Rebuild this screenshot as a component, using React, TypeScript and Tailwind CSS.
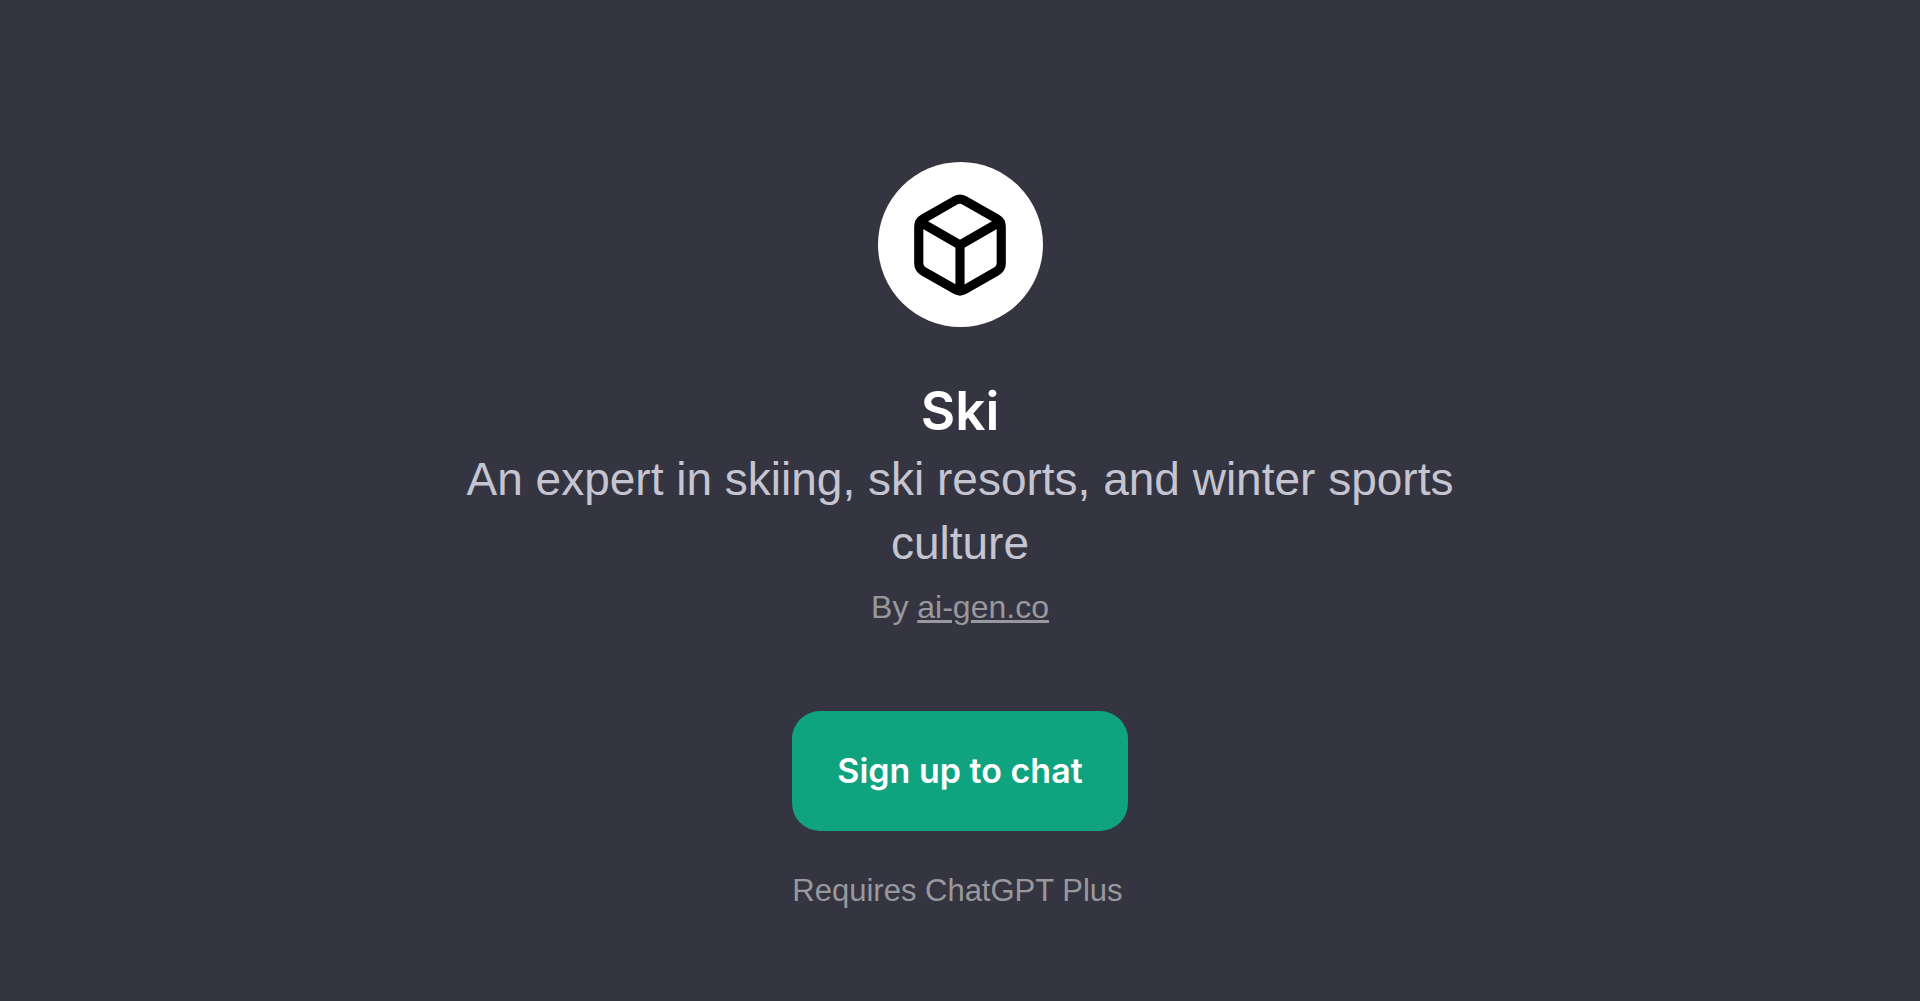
import { Box } from 'lucide-react';

const gpt = {
  name: 'Ski',
  description: 'An expert in skiing, ski resorts, and winter sports culture',
  author: 'ai-gen.co',
};

export default function App() {
  return (
    <main className="flex min-h-screen flex-col items-center bg-[#353541] px-8 pt-[162px] font-['Liberation_Sans',Arial,sans-serif]">
      <div className="flex size-[165px] items-center justify-center rounded-full bg-white">
        <Box className="size-[110px] text-black" aria-hidden="true" />
      </div>
      <h1 className="mt-12 font-['Inter',sans-serif] text-[53px] leading-[72px] font-semibold text-white">
        {gpt.name}
      </h1>
      <p className="max-w-5xl text-center text-[46px] leading-[64px] text-[#c5c5d2]">
        {gpt.description}
      </p>
      <p className="mt-2 text-[32px] leading-[48px] text-[#98989d]">
        By{' '}
        <a href="#" className="underline">
          {gpt.author}
        </a>
      </p>
      <div className="mt-20">
        <button
          type="button"
          className="block rounded-[28px] bg-[#10a37f] px-[45px] py-9 font-['Inter',sans-serif] text-[34px] leading-[48px] font-semibold text-white"
        >
          Sign up to chat
        </button>
        <p className="mt-9 text-[31px] leading-[48px] text-[#98989d]">Requires ChatGPT Plus</p>
      </div>
    </main>
  );
}
